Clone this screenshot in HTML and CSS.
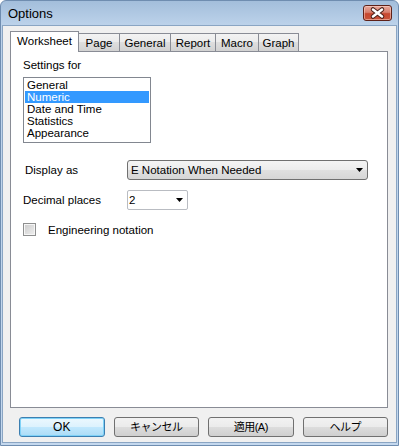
FILE: index.html
```html
<!DOCTYPE html>
<html>
<head>
<meta charset="utf-8">
<link rel="stylesheet" href="styles.css">
</head>
<body>
<div class="window">
  <div class="titlebar">
    <span class="title">Options</span>
    <button class="close" aria-label="Close">
      <svg width="27" height="14" viewBox="0 0 27 14">
        <path d="M9 3.5 L18 10.5 M18 3.5 L9 10.5" stroke="#4a2019" stroke-width="4.5" stroke-linecap="round"/>
        <path d="M9 3.5 L18 10.5 M18 3.5 L9 10.5" stroke="#ffffff" stroke-width="2.5" stroke-linecap="round"/>
      </svg>
    </button>
  </div>
  <div class="client">
    <div class="tabs">
      <div class="tab active w-ws">Worksheet</div>
      <div class="tab w-page">Page</div>
      <div class="tab w-gen">General</div>
      <div class="tab w-rep">Report</div>
      <div class="tab w-mac">Macro</div>
      <div class="tab w-gra">Graph</div>
    </div>
    <div class="panel">
      <div class="settings-label">Settings for</div>
      <ul class="listbox">
        <li>General</li>
        <li class="selected">Numeric</li>
        <li>Date and Time</li>
        <li>Statistics</li>
        <li>Appearance</li>
      </ul>
      <div class="form-row display-row">
        <span class="label label-indent">Display as</span>
        <div class="dropdown">
          <span>E Notation When Needed</span>
          <svg class="arrow" width="7" height="4" viewBox="0 0 7 4"><path d="M0 0H7L3.5 4Z" fill="#000"/></svg>
        </div>
      </div>
      <div class="form-row decimal-row">
        <span class="label">Decimal places</span>
        <div class="combo">
          <span>2</span>
          <svg class="arrow" width="7" height="4" viewBox="0 0 7 4"><path d="M0 0H7L3.5 4Z" fill="#000"/></svg>
        </div>
      </div>
      <div class="check-row">
        <span class="checkbox"></span>
        <span>Engineering notation</span>
      </div>
    </div>
    <div class="buttons">
      <button class="btn default">OK</button>
      <button class="btn jp">キャンセル</button>
      <button class="btn jp">適用(A)</button>
      <button class="btn jp">ヘルプ</button>
    </div>
  </div>
</div>
</body>
</html>
```
FILE: styles.css
```css
html, body {
  margin: 0;
  padding: 0;
  background: #ffffff;
}
body {
  font-family: "Liberation Sans", "Noto Sans CJK JP", sans-serif;
  font-size: 11.5px;
  color: #000;
}
.window {
  width: 399px;
  height: 446px;
  box-sizing: border-box;
  border: 1px solid #6f8db0;
  border-radius: 6px 6px 0 0;
  background: linear-gradient(#a3bedb, #bcd2ea 24px, #c4d8ee);
  padding: 0 1px 2px 1px;
  display: flex;
  flex-direction: column;
}
.titlebar {
  height: 24px;
  display: flex;
  align-items: flex-start;
  justify-content: space-between;
  padding: 0 5px 0 6px;
}
.title {
  font-size: 13px;
  line-height: 14px;
  margin-top: 6px;
  color: #000;
}
.close {
  margin-top: 4px;
  width: 29px;
  height: 16px;
  padding: 0;
  border: 1px solid #5e2118;
  border-radius: 3px;
  background: linear-gradient(#e9a99b, #d7806f 45%, #c7472f 55%, #c8553c);
  box-shadow: inset 0 0 0 1px rgba(255, 220, 210, 0.5);
  display: flex;
  align-items: center;
  justify-content: center;
}
.close svg { display: block; }
.client {
  flex: 1;
  background: #f0f0f0;
  border: 1px solid #8aa5c3;
  padding: 5px 8px 0 7px;
}
.tabs {
  display: flex;
  align-items: flex-end;
  height: 20px;
}
.tab {
  height: 18px;
  box-sizing: border-box;
  border: 1px solid #898c95;
  border-bottom: none;
  margin-left: -1px;
  background: linear-gradient(#f3f3f3, #ebebeb 50%, #dedede 50%, #d2d2d2);
  display: flex;
  align-items: center;
  justify-content: center;
  padding-top: 1px;
}
.tab.active {
  height: 21px;
  margin-bottom: -1px;
  margin-left: 0;
  background: #ffffff;
  position: relative;
  z-index: 1;
  padding-top: 0;
  padding-bottom: 2px;
}
.w-ws { width: 69px; }
.w-page { width: 42px; }
.w-gen { width: 52px; }
.w-rep { width: 46px; }
.w-mac { width: 44px; }
.w-gra { width: 41px; }
.panel {
  height: 357px;
  box-sizing: border-box;
  border: 1px solid #898c95;
  background: #ffffff;
  padding: 6px 12px 0 12px;
}
.settings-label {
  line-height: 14px;
}
.listbox {
  list-style: none;
  margin: 5px 0 0 0;
  padding: 1px;
  width: 128px;
  height: 66px;
  box-sizing: border-box;
  border: 1px solid #828790;
}
.listbox li {
  height: 12px;
  line-height: 12px;
  padding-left: 2px;
  white-space: nowrap;
}
.listbox li.selected {
  background: #3399ff;
  color: #ffffff;
}
.form-row {
  display: flex;
  align-items: center;
  height: 20px;
}
.display-row { margin-top: 17px; }
.decimal-row { margin-top: 10px; }
.label {
  width: 104px;
  flex: none;
}
.label-indent {
  width: 102px;
  margin-left: 2px;
}
.dropdown {
  width: 241px;
  height: 20px;
  box-sizing: border-box;
  border: 1px solid #707070;
  border-radius: 3px;
  background: linear-gradient(#f4f4f4, #ececec 50%, #e0e0e0 50%, #d6d6d6);
  display: flex;
  align-items: center;
  justify-content: space-between;
  padding: 0 4px 0 3px;
}
.combo {
  width: 61px;
  height: 20px;
  box-sizing: border-box;
  border: 1px solid #b9bcc2;
  border-radius: 2px;
  background: #ffffff;
  display: flex;
  align-items: center;
  justify-content: space-between;
  padding: 0 4px 0 1px;
}
.arrow { display: block; }
.check-row {
  margin-top: 13px;
  display: flex;
  align-items: center;
  height: 13px;
}
.checkbox {
  width: 13px;
  height: 13px;
  box-sizing: border-box;
  border: 1px solid #8e8f8f;
  background: linear-gradient(135deg, #cacaca, #f0f0f0);
  box-shadow: inset 0 0 0 1px #f6f6f6;
  margin-right: 12px;
  flex: none;
}
.buttons {
  display: flex;
  gap: 9px;
  margin-top: 9px;
  padding-left: 9px;
}
.btn {
  width: 86px;
  height: 20px;
  box-sizing: border-box;
  padding: 0;
  border: 1px solid #707070;
  border-radius: 3px;
  background: linear-gradient(#f2f2f2, #ebebeb 50%, #dddddd 50%, #cfcfcf);
  font-family: "Liberation Sans", "Noto Sans CJK JP", sans-serif;
  font-size: 12px;
  line-height: 16px;
  color: #000;
}
.btn.jp {
  font-size: 11px;
  letter-spacing: -0.5px;
}
.btn.default {
  border-color: #3c7fb1;
  background: linear-gradient(#ecf8fe, #dcf2fd 50%, #c1e8fd 50%, #acdcf6);
  box-shadow: inset 0 0 0 1px #7fd2f7;
}
```
